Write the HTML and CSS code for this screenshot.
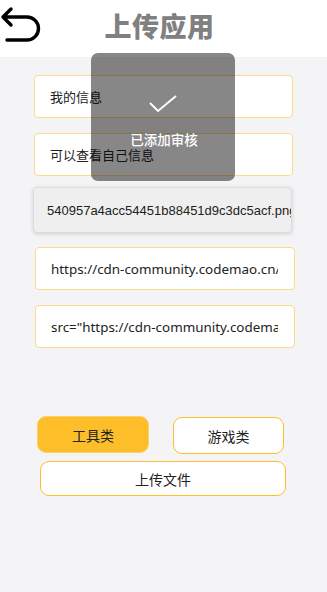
FILE: index.html
```html
<!DOCTYPE html>
<html lang="zh">
<head>
<meta charset="utf-8">
<link rel="stylesheet" href="styles.css">
</head>
<body>
<div class="app">
  <header class="header">
    <svg class="back" width="42" height="42" viewBox="0 0 42 42">
      <path d="M11 4 L3 12 L11 20 M3 12 H27 A11.5 11.5 0 0 1 27 35 H7" fill="none" stroke="#000" stroke-width="3.4" stroke-linecap="round" stroke-linejoin="round"/>
    </svg>
    <h1 class="title">上传应用</h1>
    <div class="spacer"></div>
  </header>
  <main class="main">
    <div class="field f1"><span class="val">我的信息</span></div>
    <div class="field f2"><span class="val">可以查看自己信息</span></div>
    <div class="field f3 disabled"><span class="val">540957a4acc54451b88451d9c3dc5acf.png</span></div>
    <div class="field f4"><span class="val">https://cdn-community.codemao.cn/</span></div>
    <div class="field f5"><span class="val">src="https://cdn-community.codemao.cn/</span></div>
    <div class="types">
      <button class="btn active tool">工具类</button>
      <button class="btn game">游戏类</button>
    </div>
    <button class="btn upload">上传文件</button>
  </main>
  <div class="toast">
    <svg class="check" width="30" height="20" viewBox="0 0 30 20">
      <path d="M2 8 L10 16 L28 1" fill="none" stroke="#fff" stroke-width="2"/>
    </svg>
    <div class="toast-text">已添加审核</div>
  </div>
</div>
</body>
</html>
```
FILE: styles.css
```css
* { box-sizing: border-box; }
html, body { margin: 0; padding: 0; }
body {
  width: 327px;
  height: 592px;
  background: #f4f4f6;
  font-family: "Noto Sans", "Noto Sans CJK SC", sans-serif;
  overflow: hidden;
}
.app { position: relative; height: 592px; display: flex; flex-direction: column; }
.header {
  height: 57px;
  background: #fff;
  display: flex;
  align-items: flex-start;
}
.back { margin: 5px 0 0 0; display: block; }
.title {
  flex: 1;
  margin: 9px 0 0 0;
  padding-right: 8px;
  text-align: center;
  font-family: "Noto Sans CJK SC", sans-serif;
  font-weight: 900;
  font-size: 27px;
  line-height: 34px;
  color: #808080;
  letter-spacing: 0.5px;
}
.spacer { width: 42px; }
.main {
  flex: 1;
  display: flex;
  flex-direction: column;
  align-items: flex-start;
  padding: 18px 0 0 34px;
}
.field {
  width: 259px;
  height: 43px;
  background: #fff;
  border: 1px solid #fdd98a;
  border-radius: 4px;
  padding: 0 15px;
  display: flex;
  align-items: center;
  font-size: 13px;
  color: #222;
  font-family: "Noto Sans", "Noto Sans CJK SC", sans-serif;
}
.val {
  display: block;
  flex: 1;
  min-width: 0;
  white-space: nowrap;
  overflow: hidden;
}
.f1 { margin-top: 0; }
.f2 { margin-top: 15px; }
.f3 {
  margin-top: 11px;
  margin-left: -1px;
  height: 46px;
  background: #efefef;
  border-color: #dcdcdc;
  box-shadow: 0 1px 4px rgba(0,0,0,0.15);
  padding: 0 0 0 13px;
  font-family: "Liberation Sans", sans-serif;
  font-size: 13px;
}
.f4, .f5 {
  margin-top: 14px;
  margin-left: 1px;
  width: 260px;
  padding: 0 16px 0 15px;
  font-size: 13.4px;
}
.f5 { margin-top: 15px; }
.types {
  margin-top: 68px;
  margin-left: 3px;
  display: flex;
  gap: 24px;
  align-items: flex-start;
}
.btn {
  font-family: "Noto Sans CJK SC", sans-serif;
  font-size: 14px;
  color: #222;
  background: #fff;
  border: 1.5px solid #fbbf2c;
  border-radius: 9px;
  padding: 0;
  cursor: pointer;
}
.tool { width: 112px; height: 37px; background: #fdbe29; border-color: #fdd06a; }
.game { width: 111px; height: 37px; margin-top: 1px; }
.upload { width: 246px; height: 35px; margin-top: 7px; margin-left: 6px; }
.toast {
  position: absolute;
  left: 91px;
  top: 53px;
  width: 144px;
  height: 128px;
  background: rgba(0,0,0,0.47);
  border-radius: 7px;
  display: flex;
  flex-direction: column;
  align-items: center;
}
.check { margin-top: 42px; margin-left: 0; }
.toast-text {
  margin-top: 14px;
  color: #fff;
  font-family: "Noto Sans CJK SC", sans-serif;
  font-size: 13.5px;
  font-weight: 500;
  padding-left: 2px;
}
```
